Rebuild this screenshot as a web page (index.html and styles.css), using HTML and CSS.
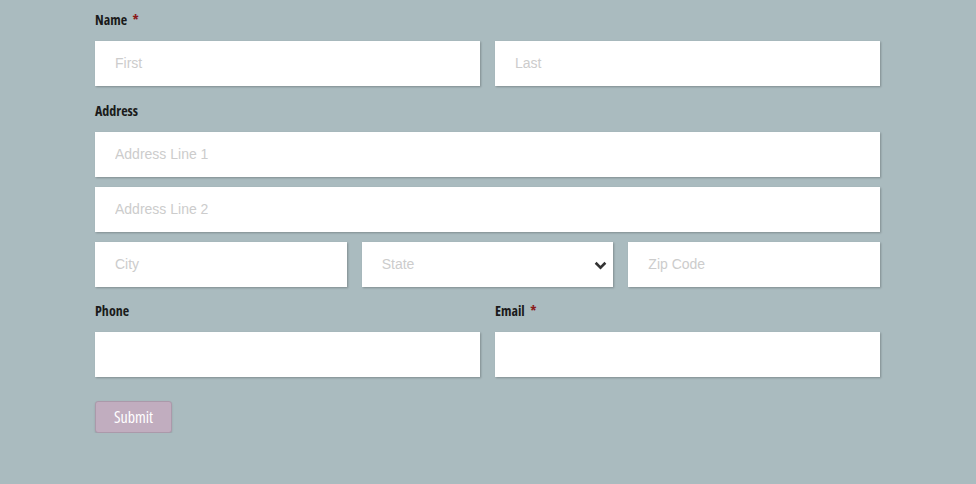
FILE: index.html
```html
<!DOCTYPE html>
<html lang="en">
<head>
  <meta charset="UTF-8" />
  <title>Contact Form</title>
  <link rel="stylesheet" href="styles.css">
</head>
<body>
  <form class="contact-form" action="">
    <div class="field">
      <label class="label">Name <span class="req">*</span></label>
      <div class="row two">
        <input class="input" type="text" placeholder="First" />
        <input class="input" type="text" placeholder="Last" />
      </div>
    </div>
    <div class="field">
      <label class="label">Address</label>
      <div class="stack">
        <input class="input" type="text" placeholder="Address Line 1" />
        <input class="input" type="text" placeholder="Address Line 2" />
        <div class="row three">
          <input class="input" type="text" placeholder="City" />
          <div class="select-wrap">
            <select class="input select">
              <option>State</option>
            </select>
            <svg class="chevron" viewBox="0 0 12 8" width="13" height="9">
              <path d="M1.5 1.5l4.5 4.5 4.5-4.5" fill="none" stroke="#333" stroke-width="2.4"></path>
            </svg>
          </div>
          <input class="input" type="text" placeholder="Zip Code" />
        </div>
      </div>
    </div>
    <div class="row two contact-row">
      <div class="field">
        <label class="label">Phone</label>
        <input class="input" type="text" />
      </div>
      <div class="field">
        <label class="label">Email <span class="req">*</span></label>
        <input class="input" type="text" />
      </div>
    </div>
    <button class="submit" type="submit">Submit</button>
  </form>
</body>
</html>
```

FILE: styles.css
```css
body {
  margin: 0;
  background-color: #aabbbf;
  font-family: "Liberation Sans", Arial, sans-serif;
}
.contact-form {
  width: 785px;
  margin: 0 0 0 95px;
  padding: 10px 0 0;
  display: flex;
  flex-direction: column;
  gap: 15px;
}
.field {
  display: flex;
  flex-direction: column;
  gap: 11px;
}
.label {
  font-family: "Open Sans", sans-serif;
  font-stretch: 75%;
  font-weight: 700;
  font-size: 14px;
  line-height: 20px;
  color: #1b1b1b;
}
.req {
  color: #8b1a1a;
  margin-left: 3px;
}
.stack {
  display: flex;
  flex-direction: column;
  gap: 10px;
}
.row {
  display: grid;
  gap: 15px;
}
.row.two {
  grid-template-columns: 1fr 1fr;
}
.row.three {
  grid-template-columns: 1fr 1fr 1fr;
}
.contact-row {
  margin-top: -1px;
}
.input {
  box-sizing: border-box;
  width: 100%;
  height: 45px;
  margin: 0;
  padding: 0 20px 1px;
  border: none;
  background: #fff;
  box-shadow: 1px 1px 2px rgba(0, 0, 0, 0.25);
  font-family: "Liberation Sans", Arial, sans-serif;
  font-size: 14px;
  color: #333;
  outline: none;
}
.input::placeholder {
  color: #cccccc;
}
.select-wrap {
  position: relative;
}
.select {
  appearance: none;
  -webkit-appearance: none;
  border-radius: 0;
  color: #cccccc;
}
.chevron {
  position: absolute;
  right: 6px;
  top: 19px;
  pointer-events: none;
}
.submit {
  align-self: flex-start;
  margin-top: 9px;
  width: 77px;
  height: 32px;
  background: #c1adbf;
  border: 1px solid #ab99aa;
  border-radius: 3px;
  box-shadow: 0 1px 2px rgba(0, 0, 0, 0.15);
  font-family: "Open Sans", sans-serif;
  font-stretch: 75%;
  font-size: 16px;
  color: #fff;
  cursor: pointer;
}
```
